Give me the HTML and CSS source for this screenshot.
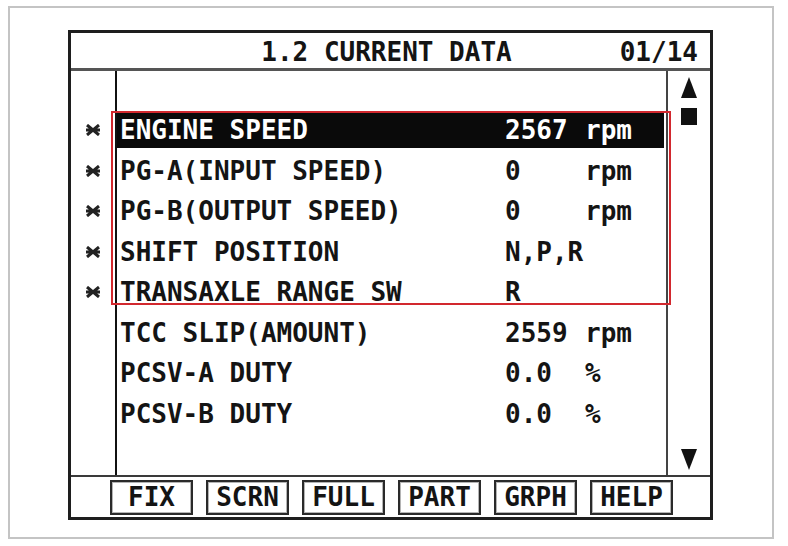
FILE: index.html
```html
<!DOCTYPE html>
<html lang="en">
<head>
    <meta charset="UTF-8">
    <meta name="viewport" content="width=device-width, initial-scale=1.0">
    <title>1.2 CURRENT DATA</title>
    <link rel="stylesheet" href="styles.css">
</head>
<body>
    <div class="sheet">
        <div class="device">
            <div class="header">
                <span></span>
                <span class="title">1.2 CURRENT DATA</span>
                <span class="page">01/14</span>
            </div>

            <div class="main">
                <!-- fixed item marks -->
                <div class="marks">
                    <div class="mark"></div>
                    <div class="mark"><svg width="14" height="12" viewBox="0 0 14 12"><path d="M1 1L13 11M13 1L1 11M0 6H14"/></svg></div>
                    <div class="mark"><svg width="14" height="12" viewBox="0 0 14 12"><path d="M1 1L13 11M13 1L1 11M0 6H14"/></svg></div>
                    <div class="mark"><svg width="14" height="12" viewBox="0 0 14 12"><path d="M1 1L13 11M13 1L1 11M0 6H14"/></svg></div>
                    <div class="mark"><svg width="14" height="12" viewBox="0 0 14 12"><path d="M1 1L13 11M13 1L1 11M0 6H14"/></svg></div>
                    <div class="mark"><svg width="14" height="12" viewBox="0 0 14 12"><path d="M1 1L13 11M13 1L1 11M0 6H14"/></svg></div>
                </div>

                <div class="list">
                    <div class="row blank"></div>
                    <div class="row sel"><div class="line"><span>ENGINE SPEED</span><span>2567</span><span>rpm</span></div></div>
                    <div class="row"><div class="line"><span>PG-A(INPUT SPEED)</span><span>0</span><span>rpm</span></div></div>
                    <div class="row"><div class="line"><span>PG-B(OUTPUT SPEED)</span><span>0</span><span>rpm</span></div></div>
                    <div class="row"><div class="line"><span>SHIFT POSITION</span><span>N,P,R</span><span></span></div></div>
                    <div class="row"><div class="line"><span>TRANSAXLE RANGE SW</span><span>R</span><span></span></div></div>
                    <div class="row"><div class="line"><span>TCC SLIP(AMOUNT)</span><span>2559</span><span>rpm</span></div></div>
                    <div class="row"><div class="line"><span>PCSV-A DUTY</span><span>0.0</span><span>%</span></div></div>
                    <div class="row"><div class="line"><span>PCSV-B DUTY</span><span>0.0</span><span>%</span></div></div>
                </div>

                <div class="scroll">
                    <div class="arrow-up"></div>
                    <div class="thumb"></div>
                    <div class="spacer"></div>
                    <div class="arrow-down"></div>
                </div>

                <!-- marked items -->
                <div class="highlight"></div>
            </div>

            <div class="keys">
                <div class="key">FIX</div>
                <div class="key">SCRN</div>
                <div class="key">FULL</div>
                <div class="key">PART</div>
                <div class="key">GRPH</div>
                <div class="key">HELP</div>
            </div>
        </div>
    </div>
</body>
</html>
```

FILE: styles.css
```css
body {
    margin: 0;
    background-color: #fff;
    font-family: 'DejaVu Sans Mono', 'Liberation Mono', monospace;
    font-weight: bold;
    font-size: 26px;
    color: #141414;
}
.sheet {
    margin: 6px 0 0 8px;
    width: 766px;
    height: 533px;
    border: 2px solid #c4c4c4;
    box-sizing: border-box;
    overflow: hidden;
}
.device {
    margin: 22px 0 0 58px;
    width: 645px;
    height: 490px;
    border: 3px solid #1e1e1e;
    box-sizing: border-box;
}
.header {
    height: 35px;
    border-bottom: 3px solid #555;
    display: grid;
    grid-template-columns: 1fr auto 1fr;
    align-items: center;
    padding: 2px 12px 0 0;
    box-sizing: border-box;
    height: 38px;
}
.title {
    padding-left: 4px;
}
.page {
    justify-self: end;
}
.main {
    position: relative;
    display: flex;
    height: 404px;
    border-bottom: 2px solid #3a3a3a;
}
.marks {
    width: 44px;
}
.mark {
    height: 40.5px;
    display: flex;
    justify-content: center;
    padding-top: 13px;
    box-sizing: border-box;
}
.mark:first-child {
    height: 40px;
}
.mark svg {
    stroke: #222;
    stroke-width: 3;
}
.list {
    width: 553px;
    border-left: 2px solid #111;
    border-right: 2px solid #444;
    box-sizing: border-box;
}
.row {
    height: 40.5px;
    padding-top: 1px;
    box-sizing: border-box;
}
.row.blank {
    height: 40px;
}
.line {
    height: 36px;
    line-height: 36px;
    margin-right: 2px;
    padding-left: 3px;
    display: grid;
    grid-template-columns: 385px 80px 1fr;
    white-space: pre;
}
.sel .line {
    background-color: #0a0a0a;
    color: #fff;
}
.scroll {
    width: 42px;
    display: flex;
    flex-direction: column;
    align-items: center;
    padding: 6px 0 5px;
    box-sizing: border-box;
}
.arrow-up {
    width: 0;
    height: 0;
    border-left: 8px solid transparent;
    border-right: 8px solid transparent;
    border-bottom: 21px solid #111;
}
.thumb {
    margin-top: 10px;
    width: 16px;
    height: 17px;
    background-color: #111;
}
.spacer {
    flex: 1;
}
.arrow-down {
    width: 0;
    height: 0;
    border-left: 8px solid transparent;
    border-right: 8px solid transparent;
    border-top: 21px solid #111;
}
.highlight {
    position: absolute;
    left: 40px;
    top: 40px;
    width: 560px;
    height: 194px;
    border: 2px solid #d2282e;
    box-sizing: border-box;
}
.keys {
    display: flex;
    gap: 13px;
    padding: 3px 0 0 39px;
}
.key {
    width: 83px;
    height: 35px;
    border: 2px solid #2a2a2a;
    box-shadow: inset 0 0 0 1px #b4b4b4;
    box-sizing: border-box;
    text-align: center;
    line-height: 31px;
}
```
